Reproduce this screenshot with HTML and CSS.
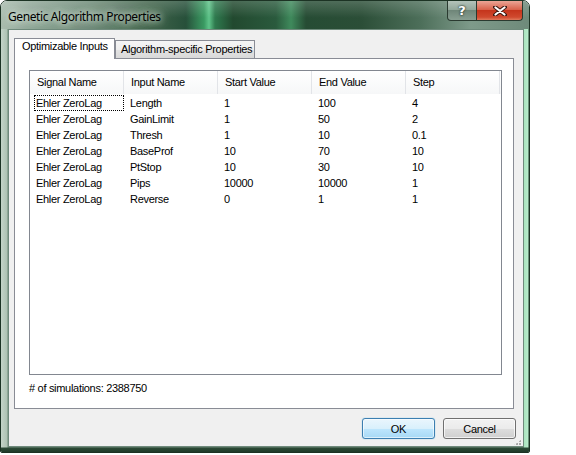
FILE: index.html
```html
<!DOCTYPE html>
<html lang="en">
<head>
  <meta charset="UTF-8" />
  <meta name="viewport" content="width=device-width, initial-scale=1.0" />
  <title>Genetic Algorithm Properties</title>
  <link rel="stylesheet" href="styles.css">
</head>
<body>
  <div class="window">

    <div class="titlebar">
      <span class="title">Genetic Algorithm Properties</span>
      <div class="caption-btns">
        <span class="cap-btn help">?</span>
        <span class="cap-btn close">
          <svg width="14" height="10" viewBox="0 0 14 10">
            <path d="M2 1 L12 9 M12 1 L2 9" stroke="#3a1810" stroke-width="4" stroke-linecap="round" />
            <path d="M2.5 1.5 L11.5 8.5 M11.5 1.5 L2.5 8.5" stroke="#fff" stroke-width="2.2" stroke-linecap="round" />
          </svg>
        </span>
      </div>
    </div>

    <div class="frame">
      <div class="client">

        <div class="tabs">
          <div class="tab active">Optimizable Inputs</div>
          <div class="tab">Algorithm-specific Properties</div>
        </div>

        <div class="tab-page">
          <div class="listview">
            <div class="lv-header">
              <div class="hd">Signal Name</div>
              <div class="hd">Input Name</div>
              <div class="hd">Start Value</div>
              <div class="hd">End Value</div>
              <div class="hd">Step</div>
            </div>
            <div class="lv-row">
              <div class="cell focus">Ehler ZeroLag</div>
              <div class="cell">Length</div>
              <div class="cell">1</div>
              <div class="cell">100</div>
              <div class="cell">4</div>
            </div>
            <div class="lv-row">
              <div class="cell">Ehler ZeroLag</div>
              <div class="cell">GainLimit</div>
              <div class="cell">1</div>
              <div class="cell">50</div>
              <div class="cell">2</div>
            </div>
            <div class="lv-row">
              <div class="cell">Ehler ZeroLag</div>
              <div class="cell">Thresh</div>
              <div class="cell">1</div>
              <div class="cell">10</div>
              <div class="cell">0.1</div>
            </div>
            <div class="lv-row">
              <div class="cell">Ehler ZeroLag</div>
              <div class="cell">BaseProf</div>
              <div class="cell">10</div>
              <div class="cell">70</div>
              <div class="cell">10</div>
            </div>
            <div class="lv-row">
              <div class="cell">Ehler ZeroLag</div>
              <div class="cell">PtStop</div>
              <div class="cell">10</div>
              <div class="cell">30</div>
              <div class="cell">10</div>
            </div>
            <div class="lv-row">
              <div class="cell">Ehler ZeroLag</div>
              <div class="cell">Pips</div>
              <div class="cell">10000</div>
              <div class="cell">10000</div>
              <div class="cell">1</div>
            </div>
            <div class="lv-row">
              <div class="cell">Ehler ZeroLag</div>
              <div class="cell">Reverse</div>
              <div class="cell">0</div>
              <div class="cell">1</div>
              <div class="cell">1</div>
            </div>
          </div>
          <p class="sims"># of simulations: 2388750</p>
        </div>

        <div class="buttons">
          <button class="btn default">OK</button>
          <button class="btn">Cancel</button>
        </div>

        <div class="grip"></div>

      </div>
    </div>

  </div>
</body>
</html>
```

FILE: styles.css
```css
* {
  margin: 0;
  padding: 0;
  box-sizing: border-box;
}

body {
  margin: 0;
  background: #fff;
  font-family: "Liberation Sans", Arial, sans-serif;
  font-size: 11px;
  letter-spacing: -0.3px;
  color: #000;
}

/* Fenêtre Aero verte */
.window {
  width: 530px;
  height: 453px;
  display: flex;
  flex-direction: column;
  border-radius: 7px 7px 2px 2px;
  border: 1px solid #1c3324;
  overflow: hidden;
}

.titlebar {
  height: 28px;
  display: flex;
  align-items: flex-start;
  background:
    linear-gradient(to bottom, rgba(255,255,255,0.18), rgba(255,255,255,0) 60%),
    linear-gradient(to right,
      #a9bcae 0, #8fa697 30px, #6d8a77 90px, #3f6249 150px, #27503a 185px,
      #3a9a62 203px, #5fc48a 208px, #2e7a4e 214px, #22492f 232px, #2a5a3d 275px,
      #3f8a5c 290px, #264c34 305px, #2b4e37 360px, #4d6f5a 420px, #7e9a8a 470px, #6e8a7a 528px);
}

.title {
  padding: 8px 0 0 7px;
  font-family: "Noto Sans", "Open Sans", sans-serif;
  font-size: 12px;
  letter-spacing: -0.4px;
  line-height: 15px;
  color: #000;
  text-shadow: 0 0 6px rgba(230, 240, 232, 0.9), 0 0 10px rgba(230, 240, 232, 0.8), 0 0 14px rgba(230, 240, 232, 0.6);
}

.caption-btns {
  margin-left: auto;
  margin-right: 6px;
  display: flex;
}

.cap-btn {
  height: 20px;
  display: flex;
  justify-content: center;
  align-items: center;
  border: 1px solid #2a3a30;
  border-top: none;
  color: #fff;
}

.help {
  width: 30px;
  border-radius: 0 0 0 4px;
  background: linear-gradient(to bottom, #b4c3ba 0, #93a89b 45%, #6f8679 50%, #889e91 100%);
  font-family: "DejaVu Sans", sans-serif;
  font-weight: bold;
  font-size: 13px;
  letter-spacing: 0;
  text-shadow: 0 0 2px #2a3a30, 0 0 2px #2a3a30;
}

.close {
  width: 46px;
  border-left: none;
  border-radius: 0 0 4px 0;
  background: linear-gradient(to bottom, #eba595 0, #d9634c 45%, #c5351c 50%, #d0492e 85%, #e07a5c 100%);
}

/* Cadre autour de la zone cliente */
.frame {
  flex: 1;
  padding: 0 5px 5px 7px;
  background:
    linear-gradient(to top, #1f3a29 0, #2b4a36 4px, rgba(0,0,0,0) 5px),
    linear-gradient(to right, #c4d4c8 0, #adc2b3 6px, #6f8a78 7px, #6f8a78 522px, #2a4a33 522px, #a9e3bd 523px, #b8eccb 527px, #1f3a28 528px);
}

.client {
  height: 418px;
  display: flex;
  flex-direction: column;
  border: 1px solid #6f8a7c;
  background: #f0f0f0;
  padding: 8px 9px 0 5px;
}

/* Onglets */
.tabs {
  display: flex;
  align-items: flex-end;
  height: 20px;
}

.tab {
  height: 18px;
  width: 140px;
  padding: 1px 0 0 5px;
  line-height: 14px;
  white-space: nowrap;
  border: 1px solid #898c95;
  border-bottom: none;
  background: linear-gradient(to bottom, #f5f5f5 0, #eeeeee 50%, #e3e3e3 51%, #d9d9d9 100%);
}

.tab.active {
  position: relative;
  z-index: 1;
  width: 101px;
  height: 21px;
  margin-bottom: -1px;
  padding: 0 0 0 7px;
  background: #fff;
}

.tab-page {
  width: 500px;
  height: 351px;
  border: 1px solid #898c95;
  background: #fff;
  padding: 11px 0 0 14px;
}

/* Liste des entrées */
.listview {
  width: 473px;
  height: 305px;
  border: 1px solid #828790;
  background: #fff;
}

.lv-header {
  display: grid;
  grid-template-columns: repeat(5, 94px);
  height: 23px;
  margin-bottom: 1px;
  background: linear-gradient(to bottom, #ffffff 0, #f6f7f8 100%);
}

.hd {
  padding-left: 7px;
  line-height: 23px;
  border-right: 1px solid #e2e4e8;
}

.lv-row {
  display: grid;
  grid-template-columns: repeat(5, 94px);
  height: 16px;
}

.cell {
  padding-left: 6px;
  line-height: 16px;
  white-space: nowrap;
}

.cell.focus {
  margin-left: 4px;
  padding-left: 1px;
  line-height: 14px;
  border: 1px dotted #000;
}

.sims {
  margin-top: 6px;
  line-height: 14px;
}

/* Boutons du bas */
.buttons {
  display: flex;
  justify-content: flex-end;
  gap: 8px;
  margin: 9px -2px 0 0;
}

.btn {
  width: 73px;
  height: 21px;
  font-family: "Liberation Sans", Arial, sans-serif;
  font-size: 11px;
  letter-spacing: -0.3px;
  color: #000;
  border: 1px solid #707070;
  border-radius: 3px;
  background: linear-gradient(to bottom, #f2f2f2 0, #ebebeb 50%, #dddddd 51%, #cfcfcf 100%);
  box-shadow: inset 0 0 0 1px rgba(255,255,255,0.7);
}

.btn.default {
  border-color: #3c7fb1;
  background: linear-gradient(to bottom, #eaf6fd 0, #d9f0fc 50%, #bee6fd 51%, #a7d9f5 100%);
  box-shadow: inset 0 0 0 1px rgba(255,255,255,0.6), 0 0 1px #48b5e6;
}

/* Poignée de redimensionnement */
.grip {
  align-self: flex-end;
  margin: auto -8px 0 0;
  width: 9px;
  height: 7px;
  background-image: radial-gradient(circle at 1px 1px, #a8a8a8 1px, transparent 1px);
  background-size: 3px 3px;
  background-position: 0 1px;
  clip-path: polygon(100% 0, 100% 100%, 0 100%);
}
```
